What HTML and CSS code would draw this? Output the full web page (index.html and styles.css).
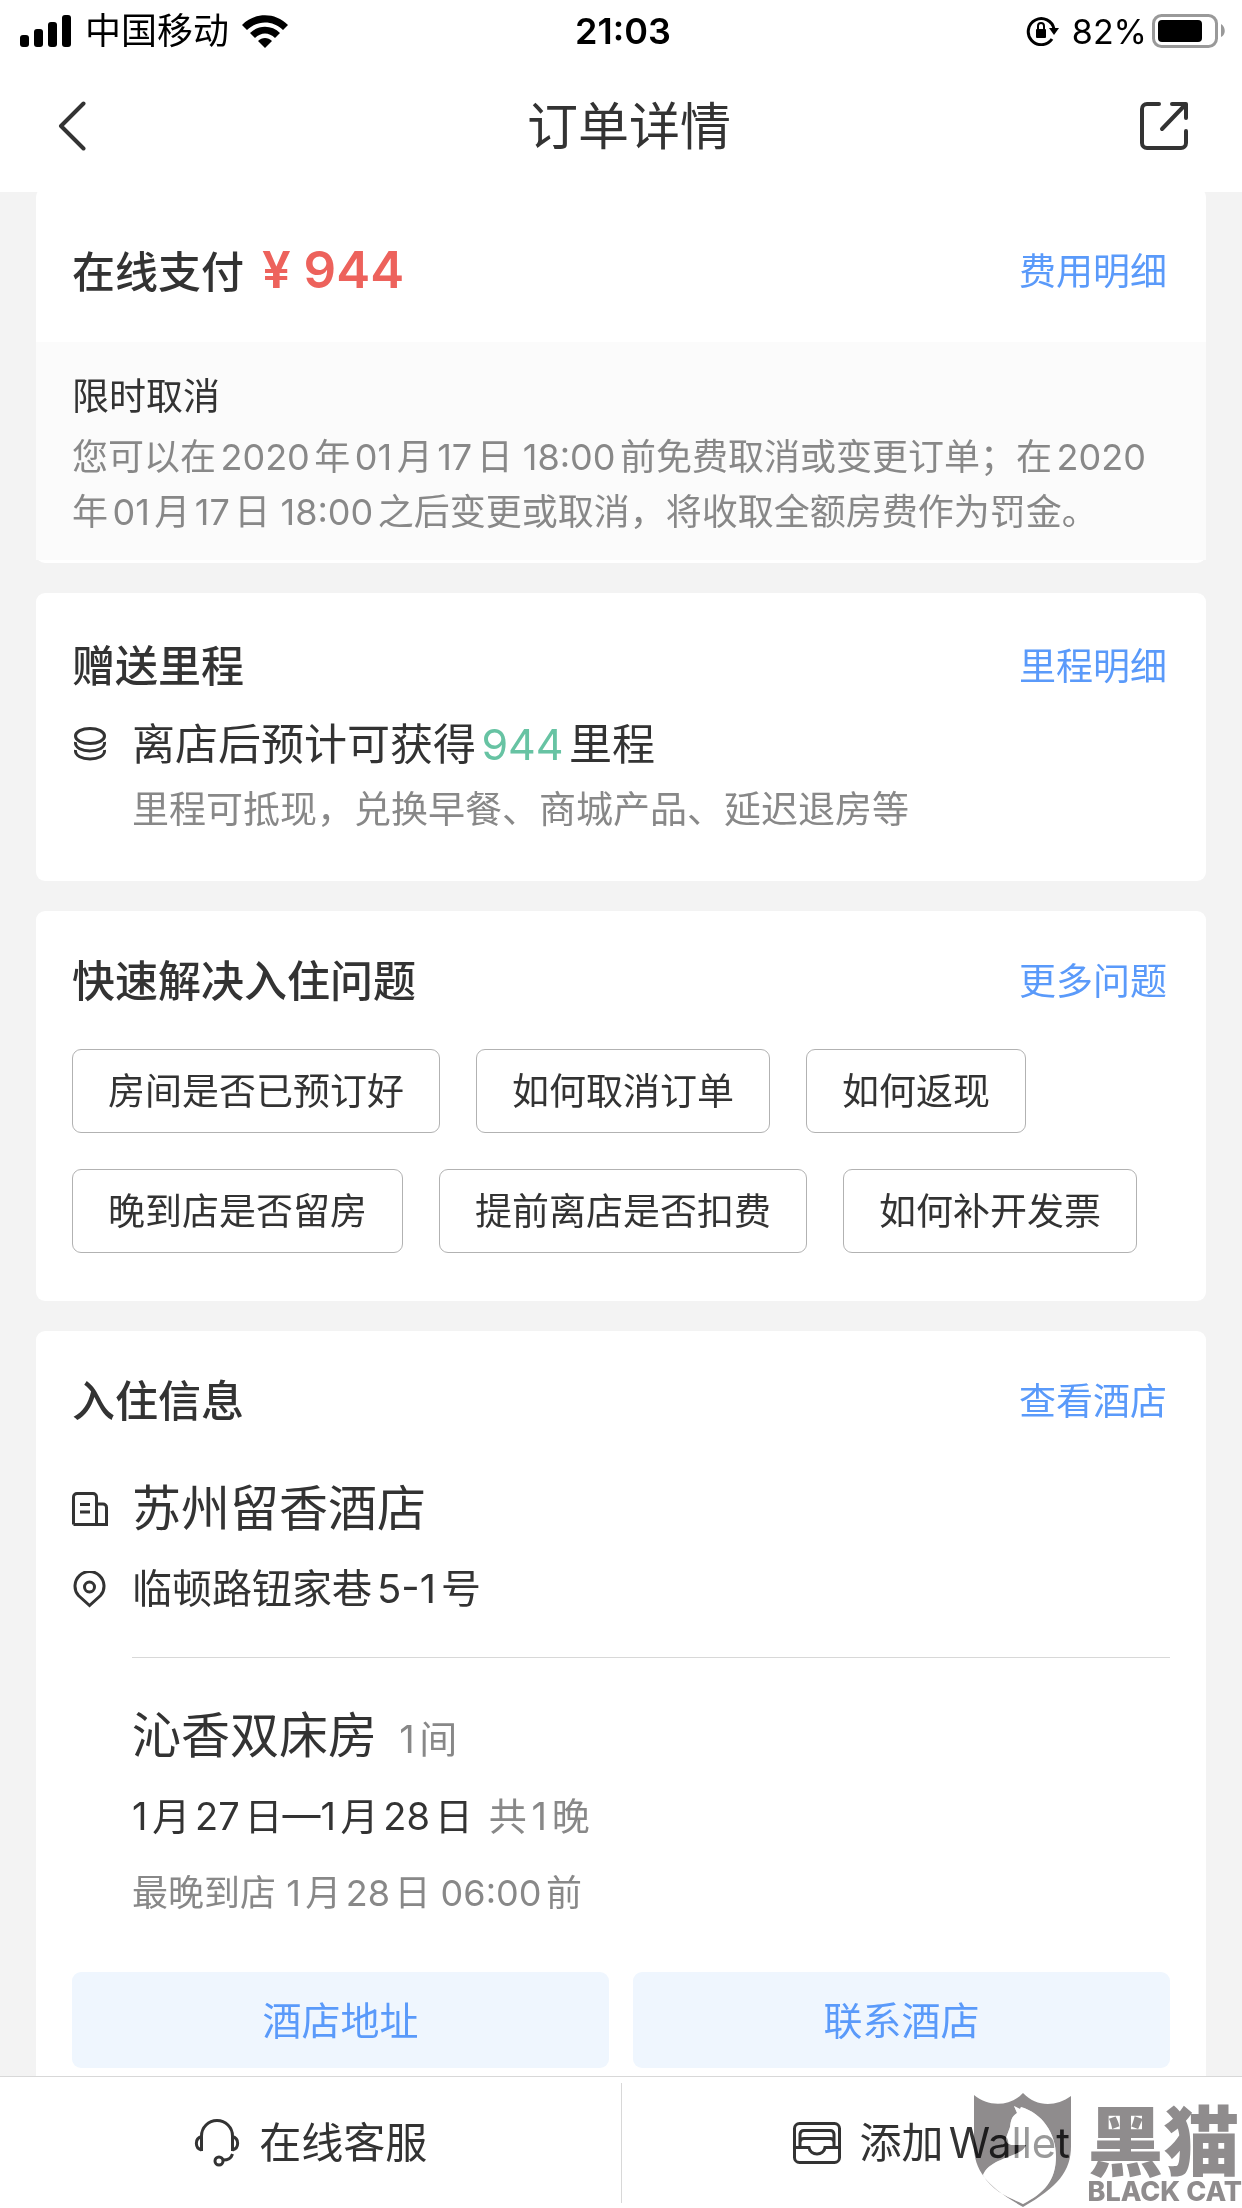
FILE: index.html
```html
<!doctype html>
<html lang="zh-CN">
<head>
    <meta charset="UTF-8">
    <meta name="viewport" content="width=device-width, initial-scale=1.0">
    <title>订单详情</title>
    <link rel="stylesheet" href="styles.css">
</head>
<body>
<div class="app">
    <div class="status">
        <div class="status__side">
            <svg class="status__signal" width="52" height="32" viewBox="0 0 52 32">
                <rect x="0" y="20" width="9" height="12" rx="3"/>
                <rect x="14" y="14" width="9" height="18" rx="3"/>
                <rect x="28" y="7" width="9" height="25" rx="3"/>
                <rect x="42" y="0" width="9" height="32" rx="3"/>
            </svg>
            <span>中国移动</span>
            <svg class="status__wifi" width="46" height="33" viewBox="0 0 46 33">
                <path d="M0 10C13-3 33-3 46 10L41 15C31 5 15 5 5 15Z"/>
                <path d="M8 18C16 9.500 30 9.500 38 18L33 23C27 17 19 17 13 23Z"/>
                <path d="M16 26C20 22 26 22 30 26L23 33Z"/>
            </svg>
        </div>
        <div class="status__time">21:03</div>
        <div class="status__side status__side_right">
            <svg class="status__lock" width="33" height="30" viewBox="0 0 33 30">
                <path d="M26 23A13 13 0 1 1 28 13" fill="none" stroke="#000" stroke-width="3"/>
                <path d="M23 12H33L28 19Z"/>
                <rect x="10" y="13" width="10" height="9" rx="1"/>
                <path d="M12 13V10A3 3 0 0 1 18 10V13" fill="none" stroke="#000" stroke-width="2"/>
            </svg>
            <span>82%</span>
            <svg class="status__battery" width="74" height="34" viewBox="0 0 74 34">
                <rect x="1.500" y="1.500" width="63" height="31" rx="8" fill="none" stroke="#999" stroke-width="3"/>
                <rect x="6" y="6" width="44" height="22" rx="4"/>
                <path d="M69 10C74 13 74 21 69 23Z" fill="#999"/>
            </svg>
        </div>
    </div>

    <header class="header">
        <button class="header__btn header__btn_back" aria-label="返回">
            <svg width="28" height="50" viewBox="0 0 28 50">
                <path d="M25.500 2.500L3 25L25.500 47.500"/>
            </svg>
        </button>
        <h1 class="header__title">订单详情</h1>
        <button class="header__btn" aria-label="分享">
            <svg width="48" height="48" viewBox="0 0 48 48">
                <path d="M19 2H7A5 5 0 0 0 2 7V41A5 5 0 0 0 7 46H41A5 5 0 0 0 46 41V29M32 2H46V16M45 3L22 27"/>
            </svg>
        </button>
    </header>

    <main class="main">
        <section class="card card_pay">
            <div class="card__head">
                <h2 class="card__title">在线支付<span class="price">¥ 944</span></h2>
                <a class="card__link" href="#">费用明细</a>
            </div>
            <div class="cancel">
                <h3 class="cancel__title">限时取消</h3>
                <p class="cancel__text">您可以在2020年01月17日 18:00前免费取消或变更订单；在2020年01月17日 18:00之后变更或取消，将收取全额房费作为罚金。</p>
            </div>
        </section>

        <section class="card card_miles">
            <div class="card__head">
                <h2 class="card__title">赠送里程</h2>
                <a class="card__link" href="#">里程明细</a>
            </div>
            <div class="row row_miles">
                <svg class="row__icon" width="36" height="34" viewBox="0 0 36 34">
                    <ellipse cx="18" cy="9" rx="14.500" ry="7.500"/>
                    <path d="M3.500 15C2 27 34 27 32.500 15M3.500 23C2 35 34 35 32.500 23"/>
                </svg>
                <p class="row__text">离店后预计可获得<span class="green">944</span>里程</p>
            </div>
            <p class="note">里程可抵现，兑换早餐、商城产品、延迟退房等</p>
        </section>

        <section class="card">
            <div class="card__head">
                <h2 class="card__title">快速解决入住问题</h2>
                <a class="card__link" href="#">更多问题</a>
            </div>
            <div class="chips">
                <button class="chip">房间是否已预订好</button>
                <button class="chip">如何取消订单</button>
                <button class="chip">如何返现</button>
                <button class="chip">晚到店是否留房</button>
                <button class="chip">提前离店是否扣费</button>
                <button class="chip">如何补开发票</button>
            </div>
        </section>

        <section class="card">
            <div class="card__head">
                <h2 class="card__title">入住信息</h2>
                <a class="card__link" href="#">查看酒店</a>
            </div>
            <div class="row row_hotel">
                <svg class="row__icon" width="36" height="34" viewBox="0 0 36 34">
                    <path d="M1.500 32.500V5A3.500 3.500 0 0 1 5 1.500H21A3.500 3.500 0 0 1 24.500 5V32.500M24.500 12H31A3.500 3.500 0 0 1 34.500 15.500V32.500H1.500M8 12.500H18M8 20H18"/>
                </svg>
                <p class="row__text">苏州留香酒店</p>
            </div>
            <div class="row row_address">
                <svg class="row__icon" width="36" height="37" viewBox="0 0 36 37">
                    <path d="M17.500 34.500L6.500 24.500A14.500 14.500 0 1 1 28.500 24.500Z"/>
                    <circle cx="17.500" cy="16" r="5"/>
                </svg>
                <p class="row__text">临顿路钮家巷5-1号</p>
            </div>
            <div class="room">
                <p class="room__name">沁香双床房<span class="room__extra">1间</span></p>
                <p class="room__dates">1月27日—1月28日<span class="room__extra">共1晚</span></p>
                <p class="room__late">最晚到店 1月28日 06:00前</p>
            </div>
            <div class="actions">
                <button class="actions__btn">酒店地址</button>
                <button class="actions__btn">联系酒店</button>
            </div>
        </section>
    </main>

    <footer class="footer">
        <button class="footer__btn">
            <svg width="48" height="48" viewBox="0 0 48 48">
                <path d="M8.500 32V17A15.500 15.500 0 0 1 39.500 17V32M8.500 17.500A7 7 0 0 0 8.500 31M39.500 17.500A7 7 0 0 1 39.500 31M39.500 35C38 40 35 41 30 41"/>
                <circle cx="26" cy="42" r="4"/>
            </svg>
            在线客服
        </button>
        <button class="footer__btn">
            <svg width="48" height="42" viewBox="0 0 48 42">
                <rect x="1.500" y="1.500" width="45" height="39" rx="5"/>
                <path d="M7 25V12A4 4 0 0 1 11 8.500H37A4 4 0 0 1 41 12V25M7 20A4 4 0 0 1 11 16.500H37A4 4 0 0 1 41 20M1.500 25.500H16C17 34 31 34 32 25.500H46.500"/>
            </svg>
            添加Wallet
        </button>
    </footer>

    <div class="mark">
        <div class="mark__logo">
            <svg class="mark__shield" width="97" height="115" viewBox="0 0 97 115">
                <path fill="#8f8c8d" fill-rule="evenodd" d="M0 2C14 14 36 14 49 0C62 14 82 14 97 3V53C97 78 84 94 49 114C14 94 0 78 0 53ZM40 13L43 20C37 24 37 28 36 34L32 45C32 50 35 52 39 52L52 52C49 64 16 64 9 82C18 98 34 104 49 111C70 100 82 88 82 63C82 40 68 20 47 14L46 16Z"/>
            </svg>
            <svg class="mark__cat" width="97" height="115" viewBox="0 0 97 115">
                <path fill="#fff" fill-opacity=".5" d="M40 13L43 20C37 24 37 28 36 34L32 45C32 50 35 52 39 52L52 52C49 64 16 64 9 82C18 98 34 104 49 111C70 100 82 88 82 63C82 40 68 20 47 14L46 16Z"/>
            </svg>
        </div>
        <div class="mark__text">
            <span class="mark__cn">黑猫</span>
            <span class="mark__en">BLACK CAT</span>
        </div>
    </div>
</div>
</body>
</html>
```
FILE: styles.css
```css
* {
    box-sizing: border-box;
    margin: 0;
    padding: 0;
}

body {
    font-family: Inter, "Noto Sans CJK SC", sans-serif;
    font-size: 37px;
    line-height: 55px;
    text-autospace: normal;
    color: #333333;
    background-color: #f3f3f3;
}

button {
    font: inherit;
    color: inherit;
    border: none;
    background: none;
    cursor: pointer;
}

a {
    text-decoration: none;
}

.app {
    position: relative;
    display: flex;
    flex-direction: column;
    height: 100vh;
    overflow: hidden;
}

/* status bar */
.status {
    display: grid;
    grid-template-columns: 1fr auto 1fr;
    align-items: center;
    flex-shrink: 0;
    height: 62px;
    padding: 0 16px 0 20px;
    font-size: 36px;
    color: #000000;
    background-color: #ffffff;
}

.status__side {
    display: flex;
    align-items: center;
    gap: 13px;
}

.status__side_right {
    justify-content: flex-end;
    gap: 5px;
    font-size: 34px;
}

.status__lock {
    margin-right: 8px;
}

.status__time {
    font-weight: 600;
}

/* header */
.header {
    display: flex;
    align-items: center;
    flex-shrink: 0;
    height: 130px;
    padding: 0 54px 2px 58px;
    background-color: #ffffff;
}

.header__btn {
    display: flex;
}

.header__btn_back {
    width: 60px;
}

.header__btn svg {
    fill: none;
    stroke: #333333;
    stroke-width: 4;
    stroke-linecap: round;
    stroke-linejoin: round;
}

.header__title {
    flex: 1;
    font-size: 51px;
    font-weight: 400;
    text-align: center;
}

/* cards */
.main {
    flex: 1;
    min-height: 0;
    padding: 0 36px;
    overflow-y: auto;
    scrollbar-width: none;
}

.card {
    margin-bottom: 30px;
    padding: 40px 36px 48px;
    border-radius: 9px;
    background-color: #ffffff;
}

.card_pay {
    margin-top: -4px;
    padding: 0 0 3px;
}

.card_pay .card__head {
    padding: 52px 36px 40px;
}

.card_miles {
    padding: 43px 36px 44px;
}

.card__head {
    display: flex;
    justify-content: space-between;
    align-items: center;
}

.card__title {
    font-size: 43px;
    font-weight: 500;
    line-height: 60px;
}

.card__link {
    padding-right: 3px;
    color: #5a9afa;
}

.price {
    margin-left: 18px;
    font-size: 51px;
    font-weight: 600;
    color: #ed625c;
}

.green {
    color: #67c3a3;
}

.cancel {
    padding: 27px 36px 20px;
    background-color: #fbfbfb;
}

.cancel__title {
    margin-bottom: 6px;
    font-size: 37px;
    font-weight: 400;
}

.cancel__text,
.room__late {
    font-size: 36px;
}

.cancel__text,
.note,
.room__late,
.room__extra {
    color: #888888;
}

.note {
    margin-top: 8px;
    padding-left: 60px;
}

.row {
    display: flex;
    align-items: center;
    gap: 24px;
    line-height: 60px;
}

.row__icon {
    flex-shrink: 0;
    fill: none;
    stroke: #333333;
    stroke-width: 3;
}

.row_miles {
    margin-top: 18px;
    font-size: 43px;
}

.row_hotel {
    margin-top: 48px;
    font-size: 49px;
}

.row_address {
    margin-top: 20px;
    font-size: 40px;
}

/* quick questions */
.chips {
    display: flex;
    flex-wrap: wrap;
    gap: 36px;
    margin-top: 38px;
}

.chip {
    height: 84px;
    padding: 0 35px;
    border: 1px solid #b2b2b2;
    border-radius: 9px;
}

/* room */
.room {
    display: flex;
    flex-direction: column;
    gap: 17px;
    margin: 38px 0 0 60px;
    padding-top: 48px;
    border-top: 1px solid #d8d8d8;
    line-height: 60px;
}

.room__name {
    font-size: 49px;
}

.room__dates,
.room__extra {
    font-size: 38px;
}

.room__extra {
    margin-left: 16px;
}

.actions {
    display: flex;
    gap: 24px;
    margin-top: 49px;
}

.actions__btn {
    flex: 1;
    height: 96px;
    font-size: 39px;
    color: #5a9afa;
    border-radius: 9px;
    background-color: #eff6fe;
}

/* bottom bar */
.footer {
    display: flex;
    align-items: center;
    flex-shrink: 0;
    height: 132px;
    border-top: 1px solid #d8d8d8;
    background-color: #ffffff;
}

.footer__btn {
    flex: 1;
    display: flex;
    justify-content: center;
    align-items: center;
    gap: 18px;
    height: 120px;
    font-size: 42px;
}

.footer__btn + .footer__btn {
    border-left: 1px solid #d8d8d8;
}

.footer__btn svg {
    fill: none;
    stroke: #333333;
    stroke-width: 3;
}

/* watermark */
.mark {
    position: absolute;
    right: 0;
    bottom: 0;
    display: flex;
    gap: 16px;
    color: #8f8c8d;
    pointer-events: none;
}

.mark__shield {
    display: block;
    mix-blend-mode: multiply;
}

.mark__cat {
    position: absolute;
    top: 0;
    left: 0;
}

.mark__text {
    display: flex;
    flex-direction: column;
    justify-content: flex-end;
}

.mark__cn {
    font-family: "Noto Sans CJK SC", sans-serif;
    font-size: 76px;
    font-weight: 900;
    line-height: 78px;
}

.mark__en {
    font-size: 27px;
    font-weight: 800;
    line-height: 32px;
}
```
